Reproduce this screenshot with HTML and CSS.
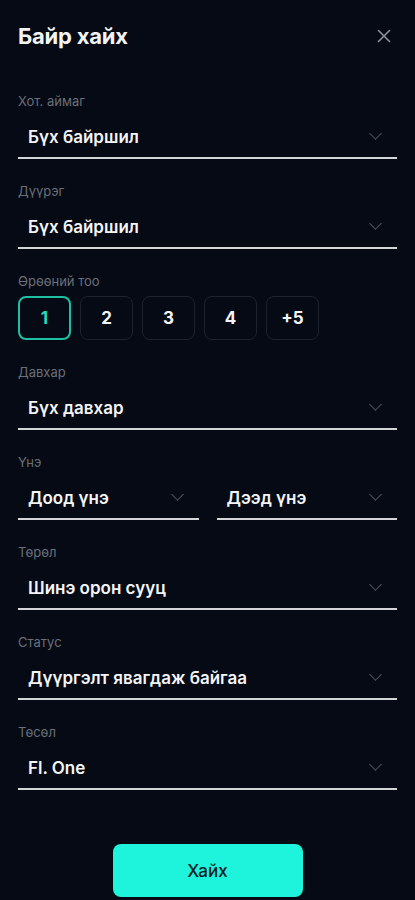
FILE: index.html
```html
<!DOCTYPE html>
<html lang="mn">
  <head>
    <meta charset="UTF-8" />
    <meta name="viewport" content="width=device-width, initial-scale=1.0" />
    <title>Байр хайх</title>
    <link rel="stylesheet" href="styles.css">
  </head>
  <body>
    <div class="sheet">
      <div class="header">
        <h1>Байр хайх</h1>
        <button class="close" type="button" aria-label="Хаах">
          <svg width="14" height="14" viewBox="0 0 14 14"><path d="M1.5 1.5l11 11M12.5 1.5l-11 11" stroke="currentColor" stroke-width="1.6" stroke-linecap="round"/></svg>
        </button>
      </div>

      <form id="searchForm">
        <div class="field">
          <label>Хот. аймаг</label>
          <div class="select"><span>Бүх байршил</span><i class="chev"></i></div>
        </div>

        <div class="field">
          <label>Дүүрэг</label>
          <div class="select"><span>Бүх байршил</span><i class="chev"></i></div>
        </div>

        <div class="field">
          <label>Өрөөний тоо</label>
          <div class="rooms">
            <button type="button" class="room active">1</button>
            <button type="button" class="room">2</button>
            <button type="button" class="room">3</button>
            <button type="button" class="room">4</button>
            <button type="button" class="room">+5</button>
          </div>
        </div>

        <div class="field">
          <label>Давхар</label>
          <div class="select"><span>Бүх давхар</span><i class="chev"></i></div>
        </div>

        <div class="field">
          <label>Үнэ</label>
          <div class="pair">
            <div class="select"><span>Доод үнэ</span><i class="chev"></i></div>
            <div class="select"><span>Дээд үнэ</span><i class="chev"></i></div>
          </div>
        </div>

        <div class="field">
          <label>Төрөл</label>
          <div class="select"><span>Шинэ орон сууц</span><i class="chev"></i></div>
        </div>

        <div class="field">
          <label>Статус</label>
          <div class="select"><span>Дүүргэлт явагдаж байгаа</span><i class="chev"></i></div>
        </div>

        <div class="field">
          <label>Төсөл</label>
          <div class="select"><span>Fl. One</span><i class="chev"></i></div>
        </div>

        <button type="submit" class="submit">Хайх</button>
      </form>
    </div>
  </body>
</html>
```

FILE: styles.css
```css
html,
body {
  margin: 0;
  height: 100%;
}
body {
  background-color: #050a14;
  font-family: Inter, "Noto Sans", sans-serif;
  color: #f2f3f5;
}

.sheet {
  padding: 24px 18px 0;
}
.header {
  display: flex;
  align-items: center;
  justify-content: space-between;
  height: 24px;
}
.header h1 {
  margin: 0;
  font-size: 22px;
  font-weight: 700;
  line-height: 24px;
  letter-spacing: -0.2px;
}
.close {
  background: none;
  border: none;
  padding: 0;
  margin-right: 6px;
  color: #8e939b;
  display: flex;
}

form {
  margin-top: 45px;
}
.field + .field {
  margin-top: 24px;
}
label {
  display: block;
  font-size: 13px;
  line-height: 16px;
  color: #6a6f78;
  margin-bottom: 7px;
}
.select {
  display: flex;
  align-items: center;
  justify-content: space-between;
  height: 41px;
  padding-left: 10px;
  border-bottom: 2px solid #d4d5d8;
  font-size: 17px;
  font-weight: 600;
  color: #f4f4f6;
}
.chev {
  width: 8px;
  height: 8px;
  margin-right: 17px;
  margin-top: -6px;
  border-right: 1.5px solid #4f5460;
  border-bottom: 1.5px solid #4f5460;
  transform: rotate(45deg);
}

.pair {
  display: grid;
  grid-template-columns: 1fr 1fr;
  gap: 18px;
}

.rooms {
  display: flex;
  gap: 9px;
}
.room {
  width: 53px;
  height: 44px;
  border: 1px solid #1d232d;
  border-radius: 8px;
  background: transparent;
  color: #f4f4f6;
  font-family: inherit;
  font-size: 17px;
  font-weight: 700;
}
.room.active {
  border: 2px solid #1fbfa4;
  color: #27d9bd;
}

.submit {
  display: block;
  width: 190px;
  height: 53px;
  margin: 54px auto 0;
  border: none;
  border-radius: 8px;
  background-color: #1ef3dc;
  color: #112022;
  font-family: inherit;
  font-size: 17px;
  font-weight: 500;
}
```
